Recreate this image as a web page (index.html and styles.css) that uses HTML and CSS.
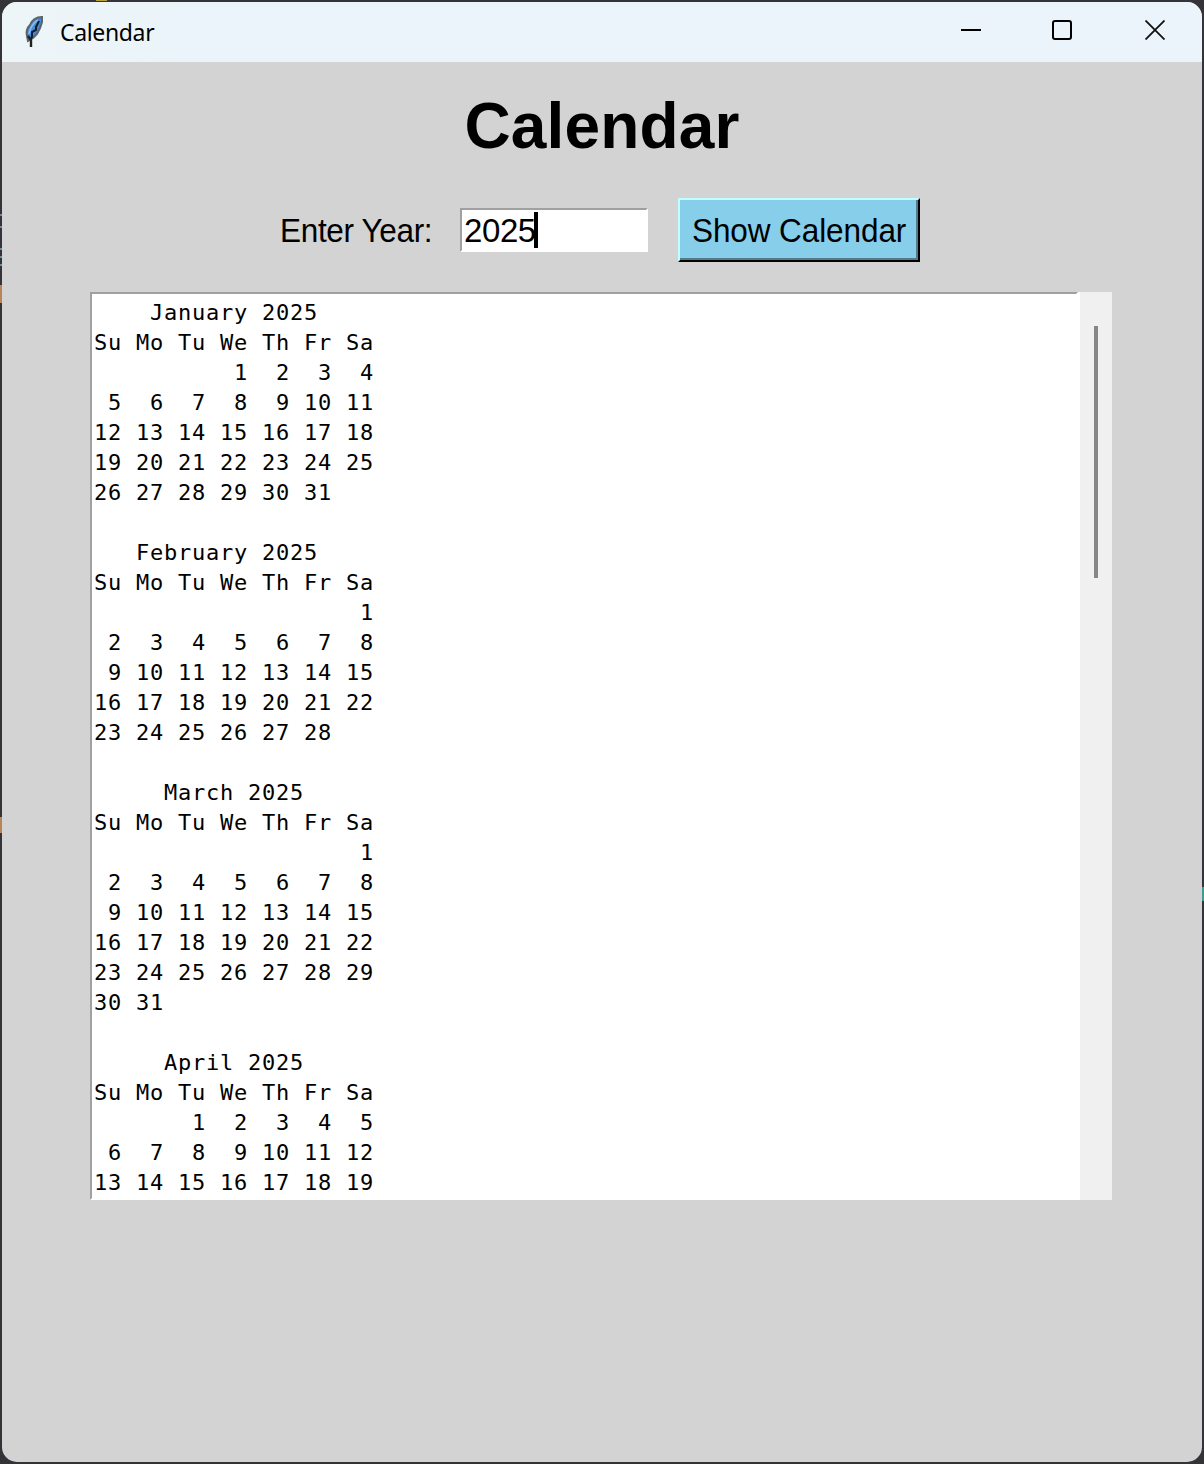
FILE: index.html
```html
<!DOCTYPE html>
<html lang="en">
<head>
<meta charset="utf-8">
<title>Calendar</title>
<link rel="stylesheet" href="styles.css">
</head>
<body>
<div class="window">
<header class="titlebar">
<svg class="feather" width="20" height="34" viewBox="0 0 20 34"><path d="M18 3 C12 3 8 6 6 11 C3 14 2 18 3 22 L4 27 L9 24 L13 20 L16 14 L18 8Z" fill="#4688d4" stroke="#5c6468" stroke-width="2"/><path d="M14 6 C9 9 6 14 5 20" fill="none" stroke="#83b8ed" stroke-width="2"/><path d="M15 7 L12 13 L12 16 L8 18 L8 23 L6 26" fill="none" stroke="#101b2b" stroke-width="2"/><path d="M4 22 L7 26 L7 33" fill="none" stroke="#222" stroke-width="2.4"/></svg>
<span class="caption">Calendar</span>
<div class="controls">
<svg width="20" height="20" viewBox="0 0 20 20"><path d="M0 10H20" stroke="#000" stroke-width="2"/></svg>
<svg class="maximize" width="20" height="20" viewBox="0 0 20 20"><rect x="1" y="1" width="18" height="18" rx="2" fill="none" stroke="#000" stroke-width="2"/></svg>
<svg width="20" height="20" viewBox="0 0 20 20"><path d="M.5 .5L19.5 19.5M19.5 .5L.5 19.5" stroke="#111" stroke-width="1.8"/></svg>
</div>
</header>
<main>
<h1>Calendar</h1>
<div class="form">
<label class="label"><span class="narrow">Enter Year:</span></label>
<div class="entry"><span>2025</span><i class="caret"></i></div>
<button class="show"><span class="narrow">Show Calendar</span></button>
</div>
<div class="output">
<div class="text"><pre>    January 2025
Su Mo Tu We Th Fr Sa
          1  2  3  4
 5  6  7  8  9 10 11
12 13 14 15 16 17 18
19 20 21 22 23 24 25
26 27 28 29 30 31

   February 2025
Su Mo Tu We Th Fr Sa
                   1
 2  3  4  5  6  7  8
 9 10 11 12 13 14 15
16 17 18 19 20 21 22
23 24 25 26 27 28

     March 2025
Su Mo Tu We Th Fr Sa
                   1
 2  3  4  5  6  7  8
 9 10 11 12 13 14 15
16 17 18 19 20 21 22
23 24 25 26 27 28 29
30 31

     April 2025
Su Mo Tu We Th Fr Sa
       1  2  3  4  5
 6  7  8  9 10 11 12
13 14 15 16 17 18 19</pre></div>
<div class="scrollbar"><div class="thumb"></div></div>
</div>
</main>
</div>
</body>
</html>
```
FILE: styles.css
```css
* { box-sizing: border-box; }
body {
  margin: 0;
  padding: 2px;
  height: 1464px;
  overflow: hidden;
  background:
    linear-gradient(#b9a03c, #b9a03c) 96px 0 / 11px 1px no-repeat,
    linear-gradient(#8c7a9c, #8c7a9c) 0 214px / 2px 2px no-repeat,
    linear-gradient(#8c7a9c, #8c7a9c) 0 226px / 2px 2px no-repeat,
    linear-gradient(#6b8ea8, #6b8ea8) 0 248px / 2px 2px no-repeat,
    linear-gradient(#6b8ea8, #6b8ea8) 0 256px / 2px 2px no-repeat,
    linear-gradient(#6b8ea8, #6b8ea8) 0 264px / 2px 2px no-repeat,
    linear-gradient(#b98456, #b98456) 0 285px / 2px 18px no-repeat,
    linear-gradient(#b98456, #b98456) 0 817px / 2px 16px no-repeat,
    linear-gradient(#3f9c90, #3f9c90) 1202px 887px / 2px 14px no-repeat,
    #343438;
  color: #000;
  font-family: "Liberation Sans", Arial, sans-serif;
}
.window {
  height: 1460px;
  border-radius: 15px;
  overflow: hidden;
  background: #d3d3d3;
}
.titlebar {
  display: flex;
  align-items: flex-start;
  height: 60px;
  padding: 12px 37px 0 22px;
  background: linear-gradient(90deg, #edf5f8, #ebf4fa 15%);
}
.caption {
  margin-left: 16px;
  font: 23px/34px "Noto Sans", sans-serif;
  letter-spacing: -.35px;
  padding-top: 1px;
}
.controls {
  display: flex;
  gap: 72px;
  margin-left: auto;
  padding-top: 6px;
}
.maximize { margin: 0 1px 0 -1px; }
main { padding: 0 90px 0 88px; }
h1 {
  margin: 0;
  padding: 28px 0 0 2px;
  height: 136px;
  font-size: 64px;
  line-height: 72px;
  letter-spacing: .15px;
  text-align: center;
}
.form {
  display: flex;
  align-items: center;
  height: 64px;
  padding-left: 188px;
  font-size: 33px;
}
.label { width: 182px; padding: 2px 0 0 2px; letter-spacing: -.35px; }
.narrow {
  display: inline-block;
  white-space: nowrap;
  transform: scaleX(.955);
  transform-origin: left;
}
.entry {
  display: flex;
  align-items: center;
  width: 188px;
  height: 44px;
  background: #fff;
  border: 2px solid #fff;
  border-top-color: #a0a0a0;
  border-left-color: #a0a0a0;
  padding-left: 2px;
}
.entry span { padding-top: 2px; letter-spacing: -.4px; }
.caret { width: 4px; height: 36px; margin-left: -2px; background: #000; }
.show {
  width: 242px;
  height: 64px;
  margin-left: 30px;
  padding: 2px 0 0 12px;
  border: 2px solid #000;
  border-top-color: #c0ffff;
  border-left-color: #c0ffff;
  box-shadow: inset -2px -2px #517b8e;
  background: #87ceeb;
  color: #000;
  font: 33px "Liberation Sans", Arial, sans-serif;
  letter-spacing: -.1px;
  text-align: left;
}
.output {
  display: flex;
  width: 1022px;
  height: 908px;
  margin-top: 30px;
  background: #fff;
}
.text {
  width: 988px;
  margin-right: 2px;
  border: 2px solid #fff;
  border-top-color: #a0a0a0;
  border-left-color: #a0a0a0;
  background: #fff;
  padding: 4px 2px 0;
}
pre {
  margin: 0;
  font: 22px/30px "DejaVu Sans Mono", monospace;
  letter-spacing: .755px;
}
.scrollbar {
  width: 32px;
  padding: 34px 0 0 14px;
  background: #f0f0f0;
}
.thumb { width: 4px; height: 252px; background: #868686; }
```
